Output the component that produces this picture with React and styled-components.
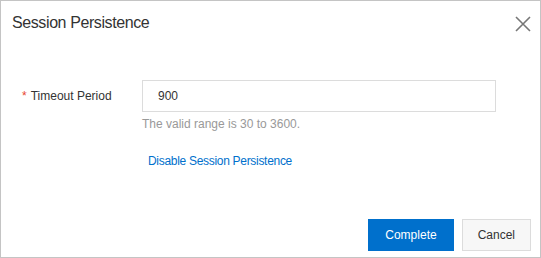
import React from "react";
import styled, { createGlobalStyle } from "styled-components";

const GlobalStyle = createGlobalStyle`
  body {
    margin: 0;
    background: #fff;
    font-family: "Liberation Sans", Arial, sans-serif;
  }
`;

const App = () => {
  return (
    <>
      <GlobalStyle />
      <Dialog>
        <Header>
          <Title>Session Persistence</Title>
          <CloseButton aria-label="close">
            <svg width="16" height="16" viewBox="0 0 16 16">
              <path d="M1 1L15 15M15 1L1 15" stroke="#777" strokeWidth="1.6" fill="none" />
            </svg>
          </CloseButton>
        </Header>
        <Body>
          <FormRow>
            <Label>
              <Star>*</Star>Timeout Period
            </Label>
            <Control>
              <Input defaultValue="900" />
              <Help>The valid range is 30 to 3600.</Help>
              <Link>Disable Session Persistence</Link>
            </Control>
          </FormRow>
        </Body>
        <Footer>
          <Button primary>Complete</Button>
          <Button>Cancel</Button>
        </Footer>
      </Dialog>
    </>
  );
};

export default App;

const Dialog = styled.div`
  box-sizing: border-box;
  width: 541px;
  height: 258px;
  border: 1px solid #c4c4c4;
  display: flex;
  flex-direction: column;
  background: #fff;
`;

const Header = styled.div`
  display: flex;
  justify-content: space-between;
  align-items: flex-start;
  padding: 10px 9px 0 11px;
`;

const Title = styled.div`
  font-size: 16px;
  line-height: 24px;
  color: #333;
  letter-spacing: -0.4px;
`;

const CloseButton = styled.button`
  border: 0;
  background: none;
  padding: 0;
  margin-top: 5px;
  width: 16px;
  height: 16px;
  display: flex;
  cursor: pointer;
`;

const Body = styled.div`
  padding: 45px 0 0 21px;
`;

const FormRow = styled.div`
  display: flex;
  align-items: flex-start;
`;

const Label = styled.div`
  width: 120px;
  font-size: 12px;
  line-height: 32px;
  color: #333;
`;

const Star = styled.span`
  color: #e8462f;
  margin-right: 4px;
`;

const Control = styled.div`
  display: flex;
  flex-direction: column;
  align-items: flex-start;
`;

const Input = styled.input`
  box-sizing: border-box;
  width: 354px;
  height: 32px;
  border: 1px solid #dcdcdc;
  padding: 0 15px;
  font-family: inherit;
  font-size: 12px;
  color: #333;
  outline: none;
`;

const Help = styled.div`
  margin-top: 3px;
  font-size: 12px;
  line-height: 18px;
  color: #999;
`;

const Link = styled.a`
  margin: 19px 0 0 6px;
  font-size: 12px;
  line-height: 18px;
  letter-spacing: -0.3px;
  color: #0070cc;
  cursor: pointer;
`;

const Footer = styled.div`
  margin-top: auto;
  display: flex;
  justify-content: flex-end;
  gap: 8px;
  padding: 0 9px 6px 0;
`;

const Button = styled.button`
  box-sizing: border-box;
  height: 32px;
  padding: 0 ${(p) => (p.primary ? "16px" : "15px")};
  min-width: ${(p) => (p.primary ? "85px" : "69px")};
  border: 1px solid ${(p) => (p.primary ? "#0070cc" : "#dcdcdc")};
  background: ${(p) => (p.primary ? "#0070cc" : "#f7f7f7")};
  color: ${(p) => (p.primary ? "#fff" : "#333")};
  font-family: inherit;
  font-size: 12px;
  cursor: pointer;
`;
